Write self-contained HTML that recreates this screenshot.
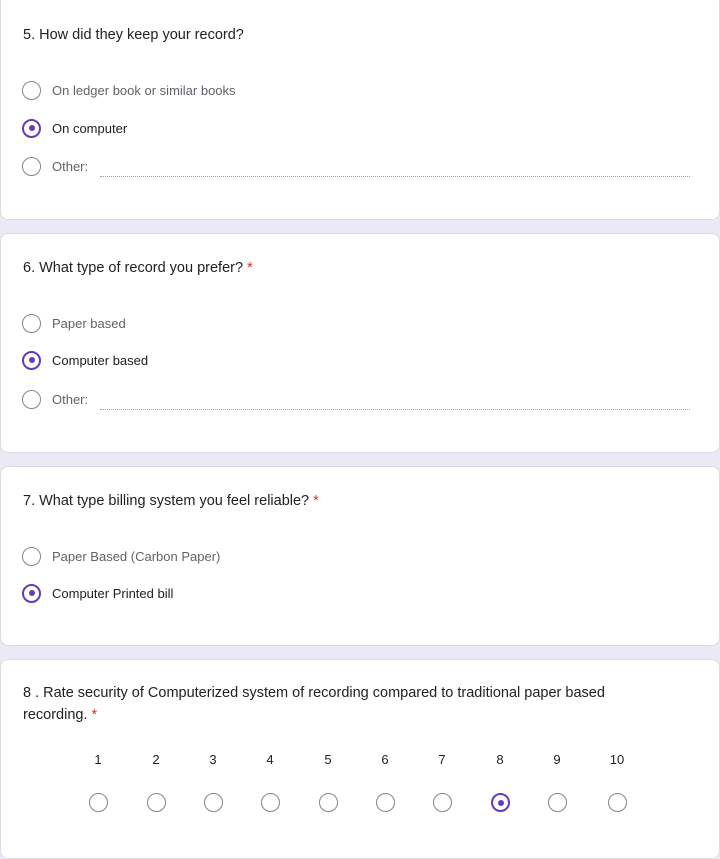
<!DOCTYPE html>
<html><head><meta charset="utf-8"><style>
body{margin:0;background:#ede8f6;font-family:"Liberation Sans",Arial,sans-serif;width:720px;height:836px;overflow:hidden;position:relative}
.card{position:absolute;left:0;width:720px;background:#fff;border:1px solid #dadce0;border-radius:8px;box-sizing:border-box}
.q{position:absolute;left:22px;font-size:14.5px;color:#202124;line-height:22px}
.star{color:#d93025}
.opt{position:absolute;left:21px;height:20px;display:flex;align-items:center;font-size:13px;color:#5f6368}
.opt.sel{color:#202124}
.r{width:19px;height:19px;border:1.5px solid #80868b;border-radius:50%;box-sizing:border-box;margin-right:11px;flex:none;position:relative}
.r.on{border-color:#673ab7;border-width:2px}
.r.on:after{content:"";position:absolute;left:4.5px;top:4.5px;width:6px;height:6px;border-radius:50%;background:#673ab7}
.line{position:absolute;left:99px;width:590px;border-bottom:1px dotted #9aa0a6}
.n{position:absolute;font-size:13px;color:#202124;width:30px;text-align:center}
.rc{position:absolute;width:19px;height:19px}
.rc .r{margin:0}
</style></head><body>
<div class="card" style="top:-8px;height:228px">
<div class="q" style="top:31px">5. How did they keep your record?</div>
<div class="opt" style="top:87px"><div class="r"></div>On ledger book or similar books</div>
<div class="opt sel" style="top:125px"><div class="r on"></div>On computer</div>
<div class="opt" style="top:163px"><div class="r"></div>Other:</div>
<div class="line" style="top:183px"></div>
</div>
<div class="card" style="top:233px;height:220px">
<div class="q" style="top:23px">6. What type of record you prefer? <span class="star">*</span></div>
<div class="opt" style="top:79px"><div class="r"></div>Paper based</div>
<div class="opt sel" style="top:116px"><div class="r on"></div>Computer based</div>
<div class="opt" style="top:155px"><div class="r"></div>Other:</div>
<div class="line" style="top:175px"></div>
</div>
<div class="card" style="top:466px;height:180px">
<div class="q" style="top:23px">7. What type billing system you feel reliable? <span class="star">*</span></div>
<div class="opt" style="top:79px"><div class="r"></div>Paper Based (Carbon Paper)</div>
<div class="opt sel" style="top:116px"><div class="r on"></div>Computer Printed bill</div>
</div>
<div class="card" style="top:659px;height:200px">
<div class="q" style="top:22px;width:630px">8 . Rate security of Computerized system of recording compared to traditional paper based recording. <span class="star">*</span></div>
</div>
<div class="n" style="left:83px;top:752px">1</div><div class="n" style="left:141px;top:752px">2</div><div class="n" style="left:198px;top:752px">3</div><div class="n" style="left:255px;top:752px">4</div><div class="n" style="left:313px;top:752px">5</div><div class="n" style="left:370px;top:752px">6</div><div class="n" style="left:427px;top:752px">7</div><div class="n" style="left:485px;top:752px">8</div><div class="n" style="left:542px;top:752px">9</div><div class="n" style="left:602px;top:752px">10</div>
<div class="rc" style="left:89px;top:793px"><div class="r"></div></div>
<div class="rc" style="left:147px;top:793px"><div class="r"></div></div>
<div class="rc" style="left:204px;top:793px"><div class="r"></div></div>
<div class="rc" style="left:261px;top:793px"><div class="r"></div></div>
<div class="rc" style="left:319px;top:793px"><div class="r"></div></div>
<div class="rc" style="left:376px;top:793px"><div class="r"></div></div>
<div class="rc" style="left:433px;top:793px"><div class="r"></div></div>
<div class="rc" style="left:491px;top:793px"><div class="r on"></div></div>
<div class="rc" style="left:548px;top:793px"><div class="r"></div></div>
<div class="rc" style="left:608px;top:793px"><div class="r"></div></div>
</body></html>
